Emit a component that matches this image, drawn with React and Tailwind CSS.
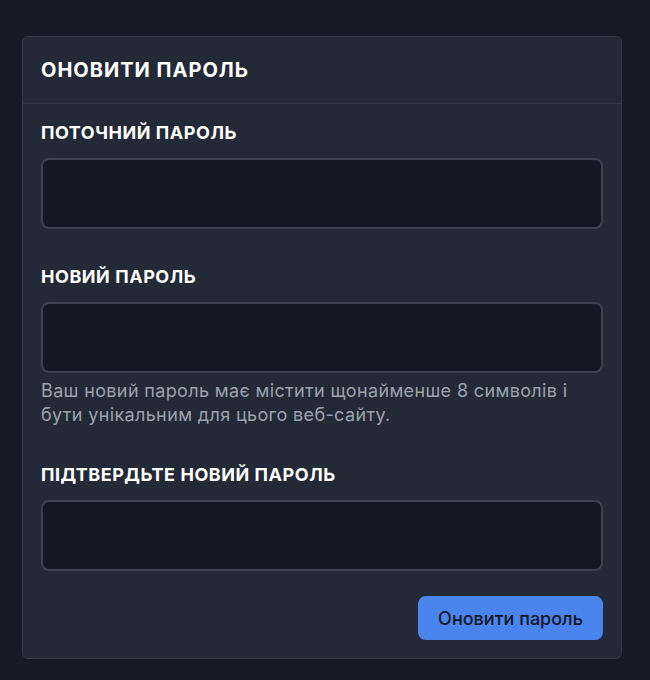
export default function App() {
  const font = { fontFamily: 'Inter, "Noto Sans", sans-serif' };
  const Field = ({ label, help }) => (
    <div className="flex flex-col">
      <div className="text-[18px] leading-6 font-bold tracking-[0.03em] text-white">{label}</div>
      <div className="mt-[13px] h-[71px] rounded-lg border-2 border-[#3c424f] bg-[#131824]" />
      {help && (
        <div className="mt-[6px] text-[18px] leading-6 text-[#9ca3af] tracking-[0.02em]">{help}</div>
      )}
    </div>
  );
  return (
    <div className="min-h-[680px] w-full bg-[#141a26] pt-[36px] pl-[22px]" style={font}>
      <div className="w-[600px] h-[623px] rounded-md border border-[#343b48] bg-[#232936] flex flex-col">
        <div className="h-[67px] border-b border-[#343b48] px-[18px] flex items-center">
          <h1 className="text-[20px] font-bold tracking-[0.05em] text-white">ОНОВИТИ ПАРОЛЬ</h1>
        </div>
        <div className="px-[18px] pt-[17px] flex flex-col gap-[36px]">
          <Field label="ПОТОЧНИЙ ПАРОЛЬ" />
          <Field
            label="НОВИЙ ПАРОЛЬ"
            help="Ваш новий пароль має містити щонайменше 8 символів і бути унікальним для цього веб-сайту."
          />
          <Field label="ПІДТВЕРДЬТЕ НОВИЙ ПАРОЛЬ" />
        </div>
        <div className="px-[18px] mt-[25px] flex justify-end">
          <button className="h-[44px] w-[185px] rounded-lg bg-[#4a85ee] text-[18px] font-medium text-[#111827]">
            Оновити пароль
          </button>
        </div>
      </div>
    </div>
  );
}
